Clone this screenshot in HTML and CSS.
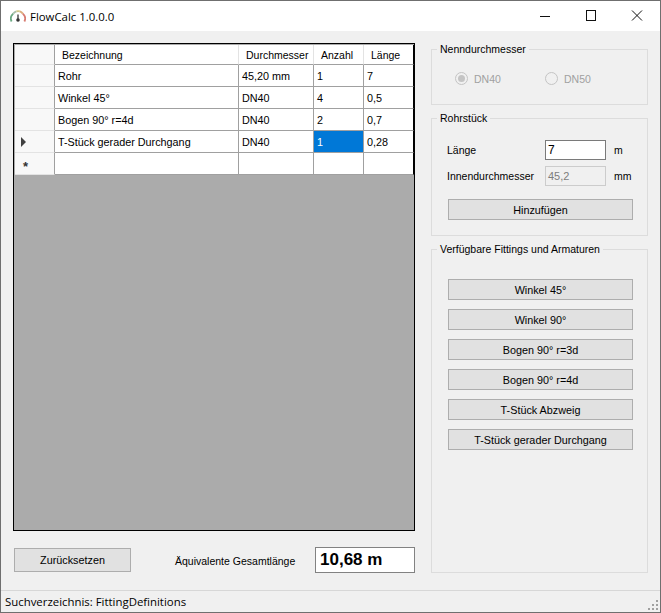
FILE: index.html
```html
<!DOCTYPE html>
<html lang="de">
<head>
<meta charset="utf-8">
<title>FlowCalc 1.0.0.0</title>
<link rel="stylesheet" href="styles.css">
</head>
<body>
<div class="window">
  <header class="titlebar">
    <svg class="app-icon" width="16" height="14" viewBox="0 0 16 14" fill="none">
      <path d="M1.6 12.5A6.6 6.6 0 0 1 3.2 4.6" stroke="#6aa982" stroke-width="1.8"/>
      <path d="M3.2 4.6A6.6 6.6 0 0 1 6.4 2.3" stroke="#a9bfaa" stroke-width="1.8"/>
      <path d="M6.4 2.3A6.6 6.6 0 0 1 9.8 2.3" stroke="#cfc888" stroke-width="1.8"/>
      <path d="M9.8 2.3A6.6 6.6 0 0 1 12.8 4.6" stroke="#dcae7c" stroke-width="1.8"/>
      <path d="M12.8 4.6A6.6 6.6 0 0 1 14.4 12.5" stroke="#d87c72" stroke-width="1.8"/>
      <path d="M8 5.5V11" stroke="#444" stroke-width="1.4"/>
      <circle cx="8" cy="11" r="1.8" fill="#333"/>
    </svg>
    <span class="title-text">FlowCalc 1.0.0.0</span>
    <div class="controls">
      <svg class="ctl" width="46" height="30" viewBox="0 0 46 30"><path d="M18 15.5h10" stroke="#111" fill="none"/></svg>
      <svg class="ctl" width="46" height="30" viewBox="0 0 46 30"><rect x="18.5" y="9.5" width="9" height="10" stroke="#111" fill="none"/></svg>
      <svg class="ctl" width="46" height="30" viewBox="0 0 46 30"><path d="M18 9.5l10 10M28 9.5l-10 10" stroke="#111" fill="none"/></svg>
    </div>
  </header>

  <main class="content">
    <section class="left">
      <div class="datagrid">
        <div class="grid-rows">
          <div class="cell head rowhead"></div>
          <div class="cell head">Bezeichnung</div>
          <div class="cell head">Durchmesser</div>
          <div class="cell head">Anzahl</div>
          <div class="cell head last">Länge</div>

          <div class="cell rowhead"></div>
          <div class="cell">Rohr</div>
          <div class="cell">45,20 mm</div>
          <div class="cell">1</div>
          <div class="cell last">7</div>

          <div class="cell rowhead"></div>
          <div class="cell">Winkel 45°</div>
          <div class="cell">DN40</div>
          <div class="cell">4</div>
          <div class="cell last">0,5</div>

          <div class="cell rowhead"></div>
          <div class="cell">Bogen 90° r=4d</div>
          <div class="cell">DN40</div>
          <div class="cell">2</div>
          <div class="cell last">0,7</div>

          <div class="cell rowhead"><span class="arrow"></span></div>
          <div class="cell">T-Stück gerader Durchgang</div>
          <div class="cell">DN40</div>
          <div class="cell selected">1</div>
          <div class="cell last">0,28</div>

          <div class="cell rowhead"><span class="star">*</span></div>
          <div class="cell"></div>
          <div class="cell"></div>
          <div class="cell"></div>
          <div class="cell last"></div>
        </div>
      </div>
      <div class="summary">
        <button class="btn reset">Zurücksetzen</button>
        <span class="total-label">Äquivalente Gesamtlänge</span>
        <output class="total">10,68 m</output>
      </div>
    </section>

    <aside class="right">
      <section class="group group-dn">
        <span class="legend">Nenndurchmesser</span>
        <div class="radios">
          <label class="radio"><span class="dot checked"></span>DN40</label>
          <label class="radio"><span class="dot"></span>DN50</label>
        </div>
      </section>
      <section class="group group-pipe">
        <span class="legend">Rohrstück</span>
        <div class="field">
          <span class="field-label">Länge</span>
          <span class="input">7</span>
          <span class="unit">m</span>
        </div>
        <div class="field">
          <span class="field-label">Innendurchmesser</span>
          <span class="input disabled">45,2</span>
          <span class="unit">mm</span>
        </div>
        <button class="btn wide add">Hinzufügen</button>
      </section>
      <section class="group group-fit">
        <span class="legend">Verfügbare Fittings und Armaturen</span>
        <div class="fit-list">
          <button class="btn wide">Winkel 45°</button>
          <button class="btn wide">Winkel 90°</button>
          <button class="btn wide">Bogen 90° r=3d</button>
          <button class="btn wide">Bogen 90° r=4d</button>
          <button class="btn wide">T-Stück Abzweig</button>
          <button class="btn wide">T-Stück gerader Durchgang</button>
        </div>
      </section>
    </aside>
  </main>

  <footer class="statusbar">
    <span>Suchverzeichnis: FittingDefinitions</span>
    <svg class="grip" width="12" height="12" viewBox="0 0 12 12" fill="#a0a0a0">
      <rect x="8" y="0" width="2" height="2"/>
      <rect x="4" y="4" width="2" height="2"/><rect x="8" y="4" width="2" height="2"/>
      <rect x="0" y="8" width="2" height="2"/><rect x="4" y="8" width="2" height="2"/><rect x="8" y="8" width="2" height="2"/>
    </svg>
  </footer>
</div>
</body>
</html>
```
FILE: styles.css
```css
* { box-sizing: border-box; }
html, body { margin: 0; padding: 0; }
body {
  width: 661px;
  height: 613px;
  overflow: hidden;
  font-family: "Liberation Sans", Arial, sans-serif;
  font-size: 10.5px;
  color: #000;
}
.window {
  width: 661px;
  height: 613px;
  border: 1px solid #6f6f6f;
  background: #f0f0f0;
  display: flex;
  flex-direction: column;
}
.titlebar {
  height: 30px;
  flex: none;
  background: #fff;
  display: flex;
  align-items: center;
  padding-left: 9px;
}
.app-icon { flex: none; }
.title-text {
  margin-left: 4px;
  font-family: "Open Sans", sans-serif;
  font-size: 11.4px;
}
.controls { margin-left: auto; display: flex; }
.ctl { display: block; }

.content {
  flex: 1;
  display: flex;
  min-height: 0;
}
.left {
  width: 402px;
  margin: 12px 0 0 12px;
  flex: none;
}
.datagrid {
  height: 488px;
  border: 1px solid #000;
  padding: 1px 0 0 1px;
  background: #ababab;
}
.grid-rows {
  display: grid;
  grid-template-columns: 40px 184px 75px 50px 50px;
  grid-template-rows: 20px repeat(5, 22px);
}
.cell {
  background: #fff;
  border-right: 1px solid #a0a0a0;
  border-bottom: 1px solid #a0a0a0;
  padding-left: 3px;
  display: flex;
  align-items: center;
  white-space: nowrap;
  font-size: 10.8px;
}
.cell.last { border-right-color: #000; }
.cell.head {
  padding-left: 7px;
  border-right-color: #e3e3e3;
  font-size: 10.5px;
}
.cell.head.last { border-right-color: #000; }
.cell.rowhead {
  background: #f8f8f8;
  border-right-color: #a0a0a0;
  border-bottom-color: #e3e3e3;
}
.cell.selected {
  background: #0078d7;
  color: #fff;
}
.arrow {
  width: 0;
  height: 0;
  margin-left: 3px;
  border-left: 5px solid #404040;
  border-top: 5px solid transparent;
  border-bottom: 5px solid transparent;
}
.star {
  margin: 6px 0 0 5px;
  font-weight: bold;
  font-size: 13px;
  line-height: 13px;
  color: #333;
}

.summary {
  display: flex;
  align-items: center;
  margin-top: 16px;
  height: 26px;
}
.btn {
  display: block;
  margin: 0;
  padding: 0;
  background: #e1e1e1;
  border: 1px solid #adadad;
  border-radius: 0;
  font: inherit;
  font-size: 10.8px;
  color: #000;
}
.reset { width: 117px; height: 24px; margin-left: 1px; }
.total-label { margin-left: 44px; padding-top: 2px; }
.total {
  margin-left: auto;
  width: 100px;
  height: 26px;
  background: #fff;
  border: 1px solid #828282;
  padding-left: 4px;
  font-size: 17px;
  font-weight: bold;
  line-height: 24px;
}

.right {
  width: 217px;
  margin: 18px 0 0 16px;
  flex: none;
  display: flex;
  flex-direction: column;
  gap: 13px;
}
.group {
  position: relative;
  border: 1px solid #dcdcdc;
  flex: none;
}
.group-dn { height: 56px; }
.group-pipe { height: 118px; padding: 21px 0 0 15px; }
.group-fit { height: 324px; padding: 29px 0 0 16px; }
.legend {
  position: absolute;
  top: -7px;
  left: 5px;
  padding: 0 3px;
  background: #f0f0f0;
  line-height: 13px;
  white-space: nowrap;
}
.radios {
  display: flex;
  padding: 22px 0 0 23px;
  color: #a0a0a0;
}
.radio {
  display: flex;
  align-items: center;
  gap: 6px;
  width: 90px;
}
.dot {
  width: 13px;
  height: 13px;
  border-radius: 50%;
  border: 1px solid #c4c4c4;
  background: #f0f0f0;
  flex: none;
  display: flex;
  align-items: center;
  justify-content: center;
}
.dot.checked::after {
  content: "";
  width: 7px;
  height: 7px;
  border-radius: 50%;
  background: #c4c4c4;
}
.field {
  display: flex;
  align-items: center;
  height: 20px;
  margin-bottom: 6px;
}
.field-label { width: 98px; white-space: nowrap; }
.input {
  width: 61px;
  height: 20px;
  background: #fff;
  border: 1px solid #7a7a7a;
  padding-left: 2px;
  font-size: 12px;
  line-height: 18px;
}
.input.disabled {
  background: #f0f0f0;
  border-color: #ccc;
  color: #7d7d7d;
  font-size: 11px;
}
.unit { margin-left: 8px; }
.add { margin: 13px 0 0 1px; }
.wide { width: 185px; height: 21px; }
.fit-list {
  display: flex;
  flex-direction: column;
  gap: 9px;
}

.statusbar {
  height: 22px;
  flex: none;
  border-top: 1px solid #d7d7d7;
  display: flex;
  align-items: center;
  justify-content: space-between;
  padding-left: 4px;
  font-family: "Open Sans", sans-serif;
  font-size: 11.4px;
}
.grip { margin-top: 8px; }
```
